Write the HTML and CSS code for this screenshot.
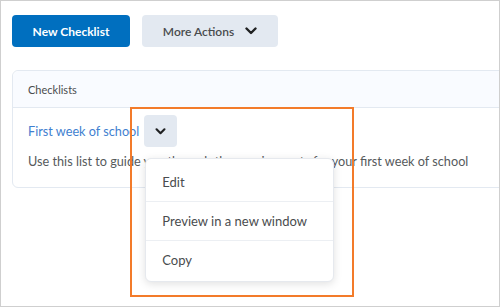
FILE: index.html
```html
<!DOCTYPE html>
<html lang="en">
<head>
    <meta charset="UTF-8">
    <title>Checklists</title>
    <link rel="stylesheet" href="styles.css">
</head>
<body>
    <div class="page">
        <div class="toolbar">
            <button class="btn btn-primary">New Checklist</button>
            <button class="btn btn-secondary">More Actions
                <svg class="chev" width="12" height="8" viewBox="0 0 12 8"><path d="M1.5 1.5 L6 6 L10.5 1.5" fill="none" stroke="#202122" stroke-width="2.4" stroke-linecap="round" stroke-linejoin="round"/></svg>
            </button>
        </div>

        <div class="card">
            <div class="card-head">Checklists</div>
            <div class="card-body">
                <div class="item-row">
                    <a class="item-link" href="#">First week of school</a>
                    <div class="menu-anchor">
                        <button class="icon-btn">
                            <svg width="11" height="7" viewBox="0 0 12 8"><path d="M1.5 1.5 L6 6 L10.5 1.5" fill="none" stroke="#202122" stroke-width="2.4" stroke-linecap="round" stroke-linejoin="round"/></svg>
                        </button>
                        <div class="highlight"></div>
                        <ul class="menu">
                            <li>Edit</li>
                            <li>Preview in a new window</li>
                            <li>Copy</li>
                        </ul>
                    </div>
                </div>
                <p class="item-desc">Use this list to guide you through the requirements for your first week of school</p>
            </div>
        </div>
    </div>
</body>
</html>
```

FILE: styles.css
```css
:root {
    --primary: #006fbf; --btn-grey: #e3e9f1; --text: #494c4e;
    --text-light: #565a5c; --link: #3f7fd0; --border: #e3e9f1;
    --orange: #f37b2a;
}
* { box-sizing: border-box; }
html, body { margin: 0; height: 100%; }
body { font-family: 'Lato', 'Liberation Sans', sans-serif; background: #fff; color: var(--text); }
.page { height: 307px; border: 1px solid #cfcfcf; padding: 14px 0 0 11px; overflow: hidden; }
.toolbar { display: flex; gap: 12px; }
.btn { height: 32px; border: none; border-radius: 4px; font-family: inherit; font-size: 12px; font-weight: 700; cursor: pointer; display: flex; align-items: center; justify-content: center; }
.btn-primary { background: var(--primary); color: #fff; width: 118px; }
.btn-secondary { background: var(--btn-grey); color: var(--text); width: 136px; gap: 11px; font-weight: 600; }
.card { margin-top: 23px; margin-right: -20px; border: 1px solid var(--border); border-radius: 6px; }
.card-head { height: 37px; background: #f9fbff; border-bottom: 1px solid var(--border); border-radius: 6px 6px 0 0; padding: 0 15px; display: flex; align-items: center; font-size: 11px; color: var(--text); }
.card-body { padding: 7px 15px 18px; }
.item-row { display: flex; align-items: center; gap: 5px; }
.item-link { color: var(--link); text-decoration: none; font-size: 12.7px; }
.menu-anchor { position: relative; }
.icon-btn { width: 33px; height: 32px; border: none; border-radius: 4px; background: var(--btn-grey); display: flex; align-items: center; justify-content: center; padding: 0; }
.item-desc { margin: 6px 0 0; font-size: 12.7px; color: var(--text-light); white-space: nowrap; }
.highlight { position: absolute; left: -14px; top: -8px; width: 224px; height: 190px; border: 2px solid var(--orange); }
.menu { position: absolute; left: 1px; top: 43px; width: 189px; margin: 0; padding: 3px 0 2px; list-style: none; background: #fff; border: 1px solid #e6e9ee; border-radius: 6px; box-shadow: 0 2px 8px rgba(0,0,0,0.12); }
.menu li { height: 39px; padding: 0 16px; display: flex; align-items: center; font-size: 13px; color: var(--text); border-top: 1px solid #eceff3; }
.menu li:first-child { border-top: none; }
```
